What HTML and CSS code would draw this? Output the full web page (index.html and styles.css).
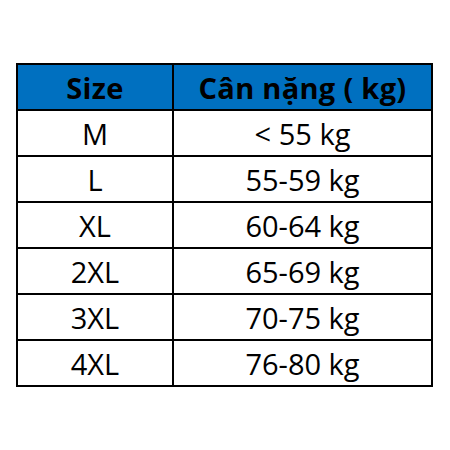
FILE: index.html
```html
<!DOCTYPE html>
<html>
<head>
<meta charset="utf-8">
<link rel="stylesheet" href="styles.css">
</head>
<body>
<div class="page">
<table class="size-table">
<thead>
<tr><th class="col-size">Size</th><th class="col-weight">Cân nặng ( kg)</th></tr>
</thead>
<tbody>
<tr><td>M</td><td>&lt; 55 kg</td></tr>
<tr><td>L</td><td>55-59 kg</td></tr>
<tr><td>XL</td><td>60-64 kg</td></tr>
<tr><td>2XL</td><td>65-69 kg</td></tr>
<tr><td>3XL</td><td>70-75 kg</td></tr>
<tr><td>4XL</td><td>76-80 kg</td></tr>
</tbody>
</table>
</div>
</body>
</html>
```
FILE: styles.css
```css
html, body {
  margin: 0;
  padding: 0;
  background: #ffffff;
}
.page {
  width: 450px;
  height: 450px;
  padding: 63px 0 0 16px;
  box-sizing: border-box;
}
.size-table {
  border-collapse: collapse;
  width: 417px;
  font-family: "Open Sans", "Liberation Sans", sans-serif;
  color: #000;
}
.size-table th,
.size-table td {
  border: 2px solid #000;
  text-align: center;
  padding: 0;
  height: 44px;
  font-size: 29px;
  line-height: 1;
}
.size-table th {
  background: #0070c0;
  font-weight: 700;
  letter-spacing: 0.3px;
}
.size-table td {
  font-weight: 400;
}
.col-size {
  width: 154px;
}
```
